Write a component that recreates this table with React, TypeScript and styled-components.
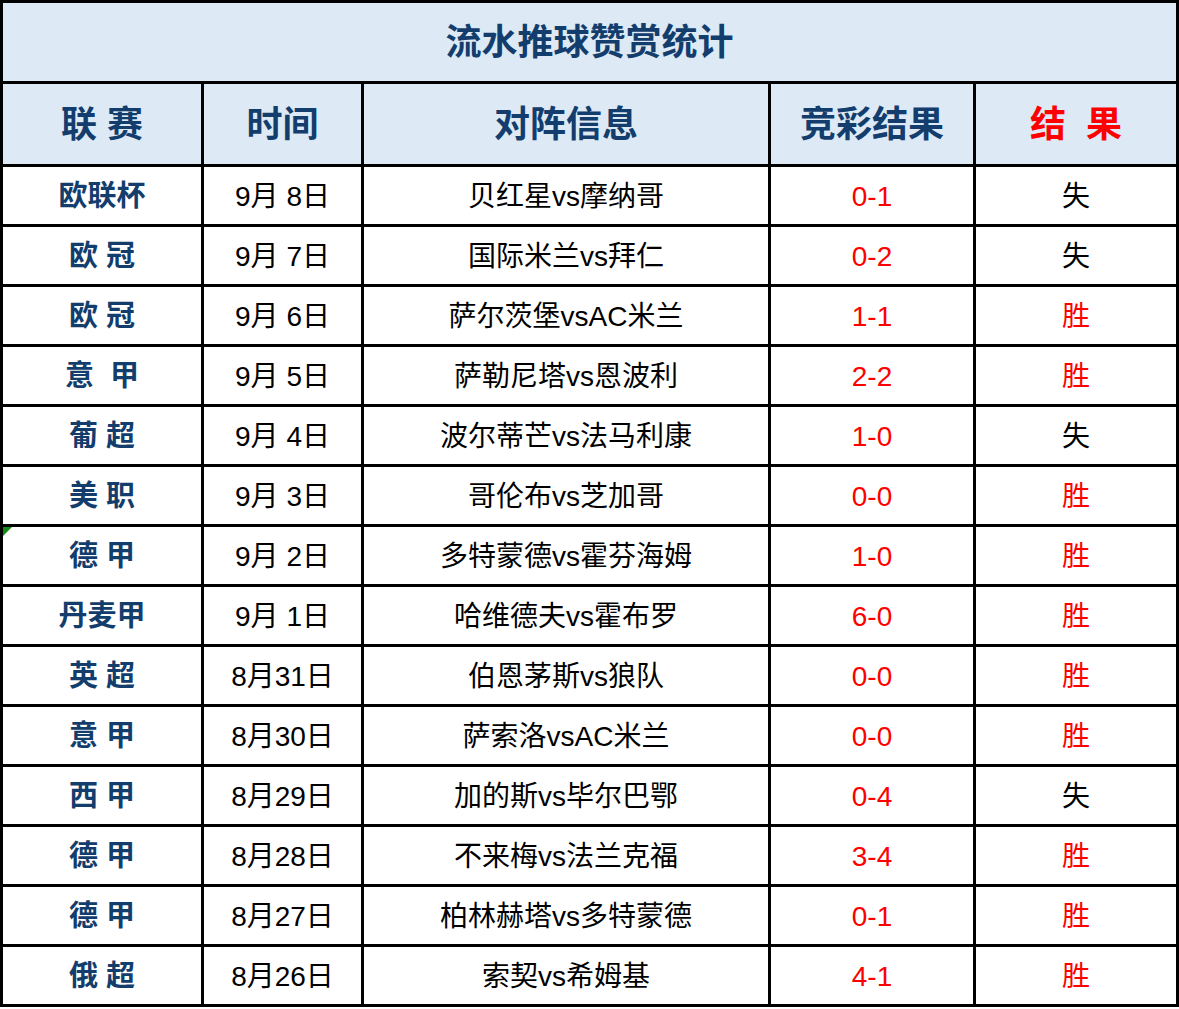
import React from 'react';
import styled, { createGlobalStyle } from 'styled-components';

interface Row {
  league: string;
  date: string;
  match: string;
  score: string;
  win: boolean;
  flag?: boolean;
}

const rows: Row[] = [
  { league: '欧联杯', date: '9月 8日', match: '贝红星vs摩纳哥', score: '0-1', win: false },
  { league: '欧 冠', date: '9月 7日', match: '国际米兰vs拜仁', score: '0-2', win: false },
  { league: '欧 冠', date: '9月 6日', match: '萨尔茨堡vsAC米兰', score: '1-1', win: true },
  { league: '意  甲', date: '9月 5日', match: '萨勒尼塔vs恩波利', score: '2-2', win: true },
  { league: '葡 超', date: '9月 4日', match: '波尔蒂芒vs法马利康', score: '1-0', win: false },
  { league: '美 职', date: '9月 3日', match: '哥伦布vs芝加哥', score: '0-0', win: true },
  { league: '德 甲', date: '9月 2日', match: '多特蒙德vs霍芬海姆', score: '1-0', win: true, flag: true },
  { league: '丹麦甲', date: '9月 1日', match: '哈维德夫vs霍布罗', score: '6-0', win: true },
  { league: '英 超', date: '8月31日', match: '伯恩茅斯vs狼队', score: '0-0', win: true },
  { league: '意 甲', date: '8月30日', match: '萨索洛vsAC米兰', score: '0-0', win: true },
  { league: '西 甲', date: '8月29日', match: '加的斯vs毕尔巴鄂', score: '0-4', win: false },
  { league: '德 甲', date: '8月28日', match: '不来梅vs法兰克福', score: '3-4', win: true },
  { league: '德 甲', date: '8月27日', match: '柏林赫塔vs多特蒙德', score: '0-1', win: true },
  { league: '俄 超', date: '8月26日', match: '索契vs希姆基', score: '4-1', win: true },
];

const GlobalStyle = createGlobalStyle`
  body {
    margin: 0;
    background: #ffffff;
    font-family: "Liberation Sans", "Noto Sans CJK SC", sans-serif;
  }
`;

const Table = styled.div`
  display: grid;
  grid-template-columns: 198px 157px 404px 202px 200px;
  grid-template-rows: 78px 80px repeat(14, 57px);
  gap: 3px;
  padding: 3px;
  width: 1179px;
  box-sizing: border-box;
  background: #000;
`;

const Cell = styled.div<{ $head?: boolean }>`
  position: relative;
  display: flex;
  align-items: center;
  justify-content: center;
  padding-top: 2px;
  box-sizing: border-box;
  background: ${(p) => (p.$head ? '#ddeaf6' : '#ffffff')};
  white-space: pre;
  line-height: 1.2;
`;

const Title = styled(Cell)`
  grid-column: 1 / -1;
  font-size: 36px;
  font-weight: 700;
  color: #133d6c;
`;

const Head = styled.span<{ $red?: boolean }>`
  font-size: 36px;
  font-weight: 700;
  color: ${(p) => (p.$red ? '#ff0000' : '#133d6c')};
`;

const League = styled.span`
  font-size: 29px;
  font-weight: 700;
  color: #133d6c;
`;

const Text = styled.span<{ $red?: boolean }>`
  font-size: 28px;
  color: ${(p) => (p.$red ? '#ff0000' : '#000000')};
`;

const Flag = styled.div`
  position: absolute;
  left: 0;
  top: 0;
  width: 0;
  height: 0;
  border-top: 9px solid #138a13;
  border-right: 9px solid transparent;
`;

const App: React.FC = () => {
  return (
    <>
      <GlobalStyle />
      <Table>
        <Title $head>流水推球赞赏统计</Title>
        <Cell $head><Head>联 赛</Head></Cell>
        <Cell $head><Head>时间</Head></Cell>
        <Cell $head><Head>对阵信息</Head></Cell>
        <Cell $head><Head>竞彩结果</Head></Cell>
        <Cell $head><Head $red>结  果</Head></Cell>
        {rows.map((r, i) => (
          <React.Fragment key={i}>
            <Cell>
              {r.flag && <Flag />}
              <League>{r.league}</League>
            </Cell>
            <Cell><Text>{r.date}</Text></Cell>
            <Cell><Text>{r.match}</Text></Cell>
            <Cell><Text $red>{r.score}</Text></Cell>
            <Cell><Text $red={r.win}>{r.win ? '胜' : '失'}</Text></Cell>
          </React.Fragment>
        ))}
      </Table>
    </>
  );
};

export default App;
